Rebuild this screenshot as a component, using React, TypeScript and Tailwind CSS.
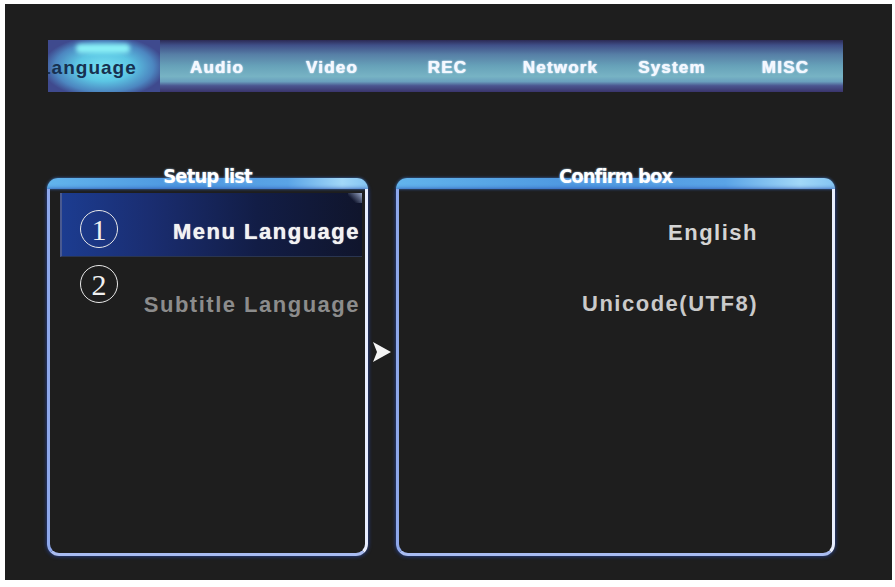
import React from "react";

const tabs = [
  { label: "Audio", w: "w-[114px]" },
  { label: "Video", w: "w-[116px]" },
  { label: "REC", w: "w-[115px]" },
  { label: "Network", w: "w-[111px]" },
  { label: "System", w: "w-[112px]" },
  { label: "MISC", w: "w-[115px]" },
];

function Circled({ n }: { n: string }) {
  return (
    <span className="w-[38px] h-[38px] rounded-full border-[1.5px] border-[#e8e8e8] flex items-center justify-center shrink-0">
      <span className="text-[30px] leading-none font-normal text-[#f0f0f0] font-['Liberation_Serif',serif] mt-[1px]">
        {n}
      </span>
    </span>
  );
}

function Panel({
  title,
  w,
  children,
}: {
  title: string;
  w: string;
  children: React.ReactNode;
}) {
  return (
    <div className={`${w} h-full relative flex flex-col`}>
      <div className="h-[11px] rounded-t-[12px] bg-[linear-gradient(90deg,#62b4ec_0%,#4e98e0_40%,#5aa4e6_75%,#a2d8f8_92%,#84c4f2_100%)] shadow-[0_0_3px_#3a70c0]" />
      <div className="flex-1 border-l-[3px] border-r-[3px] border-b-[3px] border-l-[#8ea8ec] border-r-[#e8eeff] border-b-[#a9bcf2] rounded-b-[12px] shadow-[0_0_4px_#2848a8] flex flex-col">
        {children}
      </div>
      <div className="absolute left-0 right-0 top-[-13px] flex justify-center">
        <span className="text-[20px] leading-[22px] font-bold text-white tracking-[-0.9px] font-['DejaVu_Sans_Condensed','DejaVu_Sans',sans-serif] [text-shadow:0_0_2px_#9cc8f0]">
          {title}
        </span>
      </div>
    </div>
  );
}

export default function App() {
  return (
    <div className="w-[895px] h-[587px] bg-white pt-[4px] pl-[5px] pr-[3px] pb-[7px] font-['Liberation_Sans',Arial,sans-serif]">
      <div className="w-full h-full bg-[#1e1e1e] flex flex-col">
        {/* Tab bar */}
        <div className="ml-[43px] mt-[36px] w-[795px] h-[52px] flex items-stretch bg-[linear-gradient(180deg,#2c2a55_0%,#3f4f88_10%,#577fa6_28%,#67a2b9_50%,#77b3c4_70%,#6a9fbd_80%,#4b5590_88%,#3a346c_100%)]">
          <div className="w-[112px] relative overflow-hidden flex items-center pt-[4px] bg-[radial-gradient(ellipse_55%_60%_at_50%_52%,#76e0f2_0%,#5cc6e4_45%,#4c86c0_80%,#3f4a8e_100%)]">
            <div className="absolute left-[28px] right-[30px] top-[4px] h-[9px] rounded-full bg-[#8af0f6] blur-[2px]" />
            <span className="relative ml-[-9px] text-[19px] font-bold tracking-[1px] text-[#173050] whitespace-nowrap">
              Language
            </span>
          </div>
          {tabs.map((t) => (
            <div key={t.label} className={`${t.w} flex items-center justify-center pt-[4px]`}>
              <span className="text-[17px] font-bold tracking-[1.2px] text-[#f4f8ff] [text-shadow:0_0_1px_#ffffff,0_0_2px_#c8e8ff]">
                {t.label}
              </span>
            </div>
          ))}
        </div>

        {/* Panels */}
        <div className="flex mt-[86px] ml-[42px] h-[378px]">
          <Panel title="Setup list" w="w-[321px]">
            <div className="mt-[4px] ml-[10px] mr-[3px] h-[64px] flex items-start bg-[linear-gradient(90deg,#1c3c90_0%,#1a2d70_30%,#121d46_65%,#10152c_100%)] border-l-[2px] border-l-[#4a5a90] border-b border-b-[#2a3550] relative">
              <div className="absolute right-0 top-0 w-[14px] h-[10px] bg-[linear-gradient(225deg,#9aa8c8_0%,transparent_70%)]" />
              <div className="ml-[18px] mt-[17px]">
                <Circled n="1" />
              </div>
              <div className="flex-1 flex justify-end pr-[2px] mt-[26px]">
                <span className="text-[22px] leading-[26px] font-bold tracking-[1.5px] text-[#f2f2f2] [text-shadow:0_0_1px_#ffffff]">
                  Menu Language
                </span>
              </div>
            </div>
            <div className="ml-[10px] mr-[3px] flex items-start">
              <div className="ml-[20px] mt-[8px]">
                <Circled n="2" />
              </div>
              <div className="flex-1 flex justify-end pr-[2px] mt-[35px]">
                <span className="text-[22px] leading-[26px] font-bold tracking-[1.5px] text-[#8c8c8c]">
                  Subtitle Language
                </span>
              </div>
            </div>
          </Panel>

          <div className="w-[28px] flex items-center justify-center pb-[30px]">
            <svg width="20" height="22" viewBox="0 0 20 22">
              <path d="M1 1 L19 11 L1 21 L5 11 Z" fill="#f4f4f4" />
            </svg>
          </div>

          <Panel title="Confirm box" w="w-[439px]">
            <div className="flex flex-col items-end pr-[74px] pt-[31px]">
              <span className="text-[22px] leading-[26px] font-bold tracking-[1.5px] text-[#d4d4d4]">
                English
              </span>
              <span className="mt-[45px] text-[22px] leading-[26px] font-bold tracking-[1.5px] text-[#cacaca]">
                Unicode(UTF8)
              </span>
            </div>
          </Panel>
        </div>
      </div>
    </div>
  );
}
